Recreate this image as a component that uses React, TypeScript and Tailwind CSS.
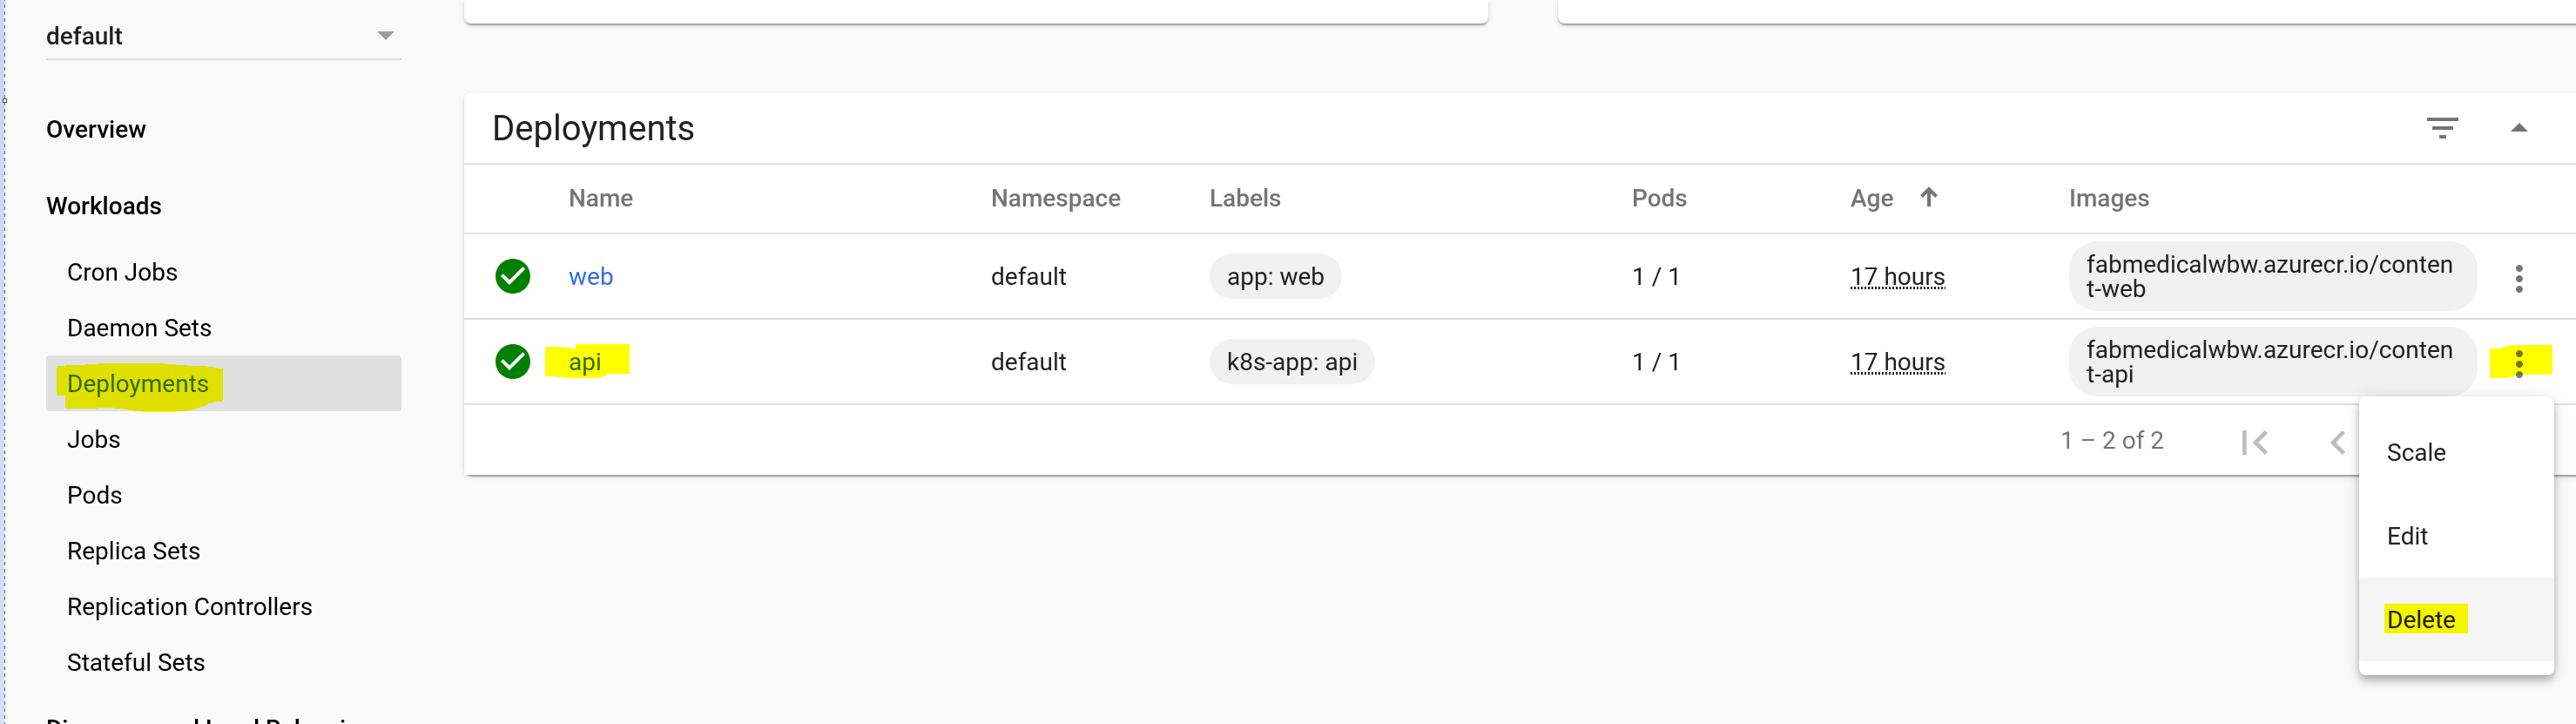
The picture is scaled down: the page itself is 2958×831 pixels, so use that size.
import type { ReactNode } from 'react';

const workloads = [
  'Cron Jobs',
  'Daemon Sets',
  'Deployments',
  'Jobs',
  'Pods',
  'Replica Sets',
  'Replication Controllers',
  'Stateful Sets',
];

const rows = [
  { name: 'web', label: 'app: web', image: 'fabmedicalwbw.azurecr.io/content-web' },
  { name: 'api', label: 'k8s-app: api', image: 'fabmedicalwbw.azurecr.io/content-api' },
];

const cardShadow =
  'shadow-[0_4px_2px_-2px_rgba(0,0,0,0.2),0_2px_2px_0_rgba(0,0,0,0.14),0_2px_6px_0_rgba(0,0,0,0.12)]';

function Icon({ d, className }: { d: string; className: string }) {
  return (
    <svg viewBox="0 0 24 24" className={`block shrink-0 fill-current ${className}`}>
      <path d={d} />
    </svg>
  );
}

function Marker({ points, className, box }: { points: string; className: string; box: string }) {
  return (
    <svg viewBox={box} shapeRendering="crispEdges" className={`pointer-events-none absolute mix-blend-multiply ${className}`}>
      <polygon points={points} fill="#ffff00" />
    </svg>
  );
}

function Heading({ children, className }: { children: ReactNode; className: string }) {
  return <div className={`whitespace-nowrap font-medium leading-[33px] text-black ${className}`}>{children}</div>;
}

function Sidebar() {
  return (
    <nav className="w-[408px] shrink-0">
      <div className="flex h-[69px] items-center justify-between border-b-2 border-[#dcdcdc] pr-2 pt-4 font-medium text-[#212121]">
        <span className="leading-[33px]">default</span>
        <svg viewBox="0 0 20 10" className="-mt-px h-[10px] w-5 fill-[#9b9b9b]">
          <path d="M0 0h20L10 10z" />
        </svg>
      </div>
      <Heading className="mt-[63px]">Overview</Heading>
      <Heading className="mt-[55px]">Workloads</Heading>
      <ul className="mt-[27px]">
        {workloads.map((item) => (
          <li
            key={item}
            className={
              item === 'Deployments'
                ? 'relative h-16 rounded bg-[#e0e0e0] pl-6 leading-[65px] text-[#326de6]'
                : 'h-16 pl-6 leading-[65px] text-black'
            }
          >
            {item}
            {item === 'Deployments' && (
              <Marker
                box="65 417 191 56"
                className="left-3 top-[9px] h-14 w-[191px]"
                points="65,420 75,420 75,419 99,419 99,418 114,418 114,417 188,417 188,418 202,418 202,419 215,419 215,420 237,420 237,421 246,421 246,422 250,422 250,423 256,423 256,460 254,461 246,461 246,462 240,463 237,465 231,467 225,469 219,471 213,472 202,472 202,473 163,473 163,472 153,472 153,471 147,471 147,470 142,470 142,469 132,469 132,468 112,468 112,469 75,469 75,454 65,454"
              />
            )}
          </li>
        ))}
      </ul>
      <Heading className="mt-7">Discovery and Load Balancing</Heading>
    </nav>
  );
}

const grid = 'grid grid-cols-[88px_485px_251px_485px_251px_251px_469px_96px] items-center pl-8';
const cellText = 'mt-px leading-[33px]';

function Row({ name, label, image }: { name: string; label: string; image: string }) {
  return (
    <div className={`h-[98px] border-b-2 border-[#e0e0e0] text-[#212121] ${grid}`}>
      <Icon
        className="size-12 text-[#008000]"
        d="M12 2C6.48 2 2 6.48 2 12s4.48 10 10 10 10-4.48 10-10S17.52 2 12 2zm-2 15l-5-5 1.41-1.41L10 14.17l7.59-7.59L19 8l-9 9z"
      />
      <div className={`relative text-[#326de6] ${cellText}`}>
        {name}
        {name === 'api' && (
          <Marker
            box="626 395 97 39"
            className="-left-[27px] -top-[4px] h-[39px] w-[97px]"
            points="626,398 645,398 645,399 655,399 655,400 661,400 661,395 723,395 723,429 699,429 699,430 696,430 696,432 692,432 692,433 688,433 688,434 649,434 649,433 638,433 638,432 626,432"
          />
        )}
      </div>
      <div className={cellText}>default</div>
      <div className="flex">
        <span className="h-[52px] rounded-full bg-[#f1f1f1] px-5 leading-[53px]">{label}</span>
      </div>
      <div className={cellText}>1 / 1</div>
      <div className={`flex ${cellText}`}>
        <span className="bg-[repeating-linear-gradient(90deg,#212121_0px,#212121_2px,transparent_2px,transparent_4px)] bg-[length:100%_3px] bg-[position:0px_28px] bg-no-repeat">
          17 hours
        </span>
      </div>
      <div className="flex h-20 items-center break-all rounded-[32px] bg-[#f1f1f1] px-5 pt-px leading-7">{image}</div>
      <div className="relative flex justify-center pt-[6px] text-[#757575]">
        <Icon
          className="size-12"
          d="M12 8c1.1 0 2-.9 2-2s-.9-2-2-2-2 .9-2 2 .9 2 2 2zm0 2c-1.1 0-2 .9-2 2s.9 2 2 2 2-.9 2-2-.9-2-2-2zm0 6c-1.1 0-2 .9-2 2s.9 2 2 2 2-.9 2-2-.9-2-2-2z"
        />
        {name === 'api' && (
          <Marker
            box="2859 396 72 38"
            className="left-[14px] top-2 h-[38px] w-[72px]"
            points="2859,400 2872,400 2872,399 2877,399 2877,397 2882,397 2882,396 2931,396 2931,430 2889,430 2889,431 2886,431 2886,433 2880,433 2880,434 2859,434"
          />
        )}
      </div>
    </div>
  );
}

function ActionMenu() {
  return (
    <div className="absolute left-[2709px] top-[455px] w-56 rounded-lg bg-white py-4 text-[#212121] shadow-[0_4px_8px_-2px_rgba(0,0,0,0.2),0_8px_10px_0_rgba(0,0,0,0.14),0_2px_20px_0_rgba(0,0,0,0.12)]">
      <div className="h-24 px-8 leading-[97px]">Scale</div>
      <div className="h-24 px-8 leading-[97px]">Edit</div>
      <div className="relative h-24 rounded bg-[#f5f5f5] px-8 leading-[97px]">
        Delete
        <div className="absolute left-[29px] top-[30px] h-[34px] w-24 bg-[#ffff00] mix-blend-multiply" />
      </div>
    </div>
  );
}

export default function App() {
  return (
    <div className="relative flex h-[831px] w-[2958px] overflow-hidden bg-[#fafafa] font-['Roboto',sans-serif] text-[28px]">
      <div className="relative w-[53px] shrink-0">
        <div className="h-full w-[5px] bg-linear-to-b from-[#cdd6e8] to-[#d6e1ef]" />
        <svg className="absolute left-0 top-0 h-full w-[10px]" shapeRendering="crispEdges">
          <line x1="5.5" y1="-3" x2="5.5" y2="831" stroke="#0078d7" strokeDasharray="4 4" />
          <rect x="3.5" y="113.5" width="4" height="4" fill="#fff" stroke="#505050" />
        </svg>
      </div>
      <Sidebar />
      <main className="ml-[72px] flex w-[2425px] shrink-0 flex-col">
        <div className="flex h-[27px] gap-20">
          <div className={`w-[1176px] shrink-0 rounded-b-lg bg-white ${cardShadow}`} />
          <div className={`w-[1200px] shrink-0 rounded-b-lg bg-white ${cardShadow}`} />
        </div>
        <section className={`mt-20 w-[2500px] rounded-lg ${cardShadow}`}>
          <header className="flex h-[82px] items-center rounded-t-lg border-b-2 border-[#e0e0e0] bg-white pl-8">
            <h2 className="mt-px w-[2216px] text-[40px] leading-[47px] text-[#212121]">Deployments</h2>
            <Icon className="size-12 text-[#757575]" d="M10 18h4v-2h-4v2zM3 6v2h18V6H3zm3 7h12v-2H6v2z" />
            <Icon className="ml-10 size-12 text-[#757575]" d="M7 14l5-5 5 5z" />
          </header>
          <div className="bg-white">
            <div className={`h-20 border-b-2 border-[#e0e0e0] pb-px font-medium leading-[33px] text-[#757575] ${grid}`}>
              <div />
              <div>Name</div>
              <div>Namespace</div>
              <div>Labels</div>
              <div>Pods</div>
              <div className="flex items-center">
                Age
                <svg viewBox="0 0 20 23" className="ml-[31px] mt-[-4px] h-[23px] w-5 fill-none stroke-[#757575] stroke-4">
                  <path d="M10 23V3M1.5 11.5L10 3l8.500 8.500" />
                </svg>
              </div>
              <div>Images</div>
              <div />
            </div>
            {rows.map((row) => (
              <Row key={row.name} {...row} />
            ))}
            <footer className="flex h-20 pl-[1833px] text-[#757575]">
              <span className="w-[195px] leading-[81px]">1 – 2 of 2</span>
              <Icon className="mt-[15px] size-14 text-[#bdbdbd]" d="M18.41 16.59L13.82 12l4.590-4.590L17 6l-6 6 6 6zM6 6h2v12H6z" />
              <Icon className="ml-10 mt-[15px] size-14 text-[#bdbdbd]" d="M15.41 7.41L14 6l-6 6 6 6 1.410-1.410L10.83 12z" />
            </footer>
          </div>
        </section>
      </main>
      <ActionMenu />
    </div>
  );
}
